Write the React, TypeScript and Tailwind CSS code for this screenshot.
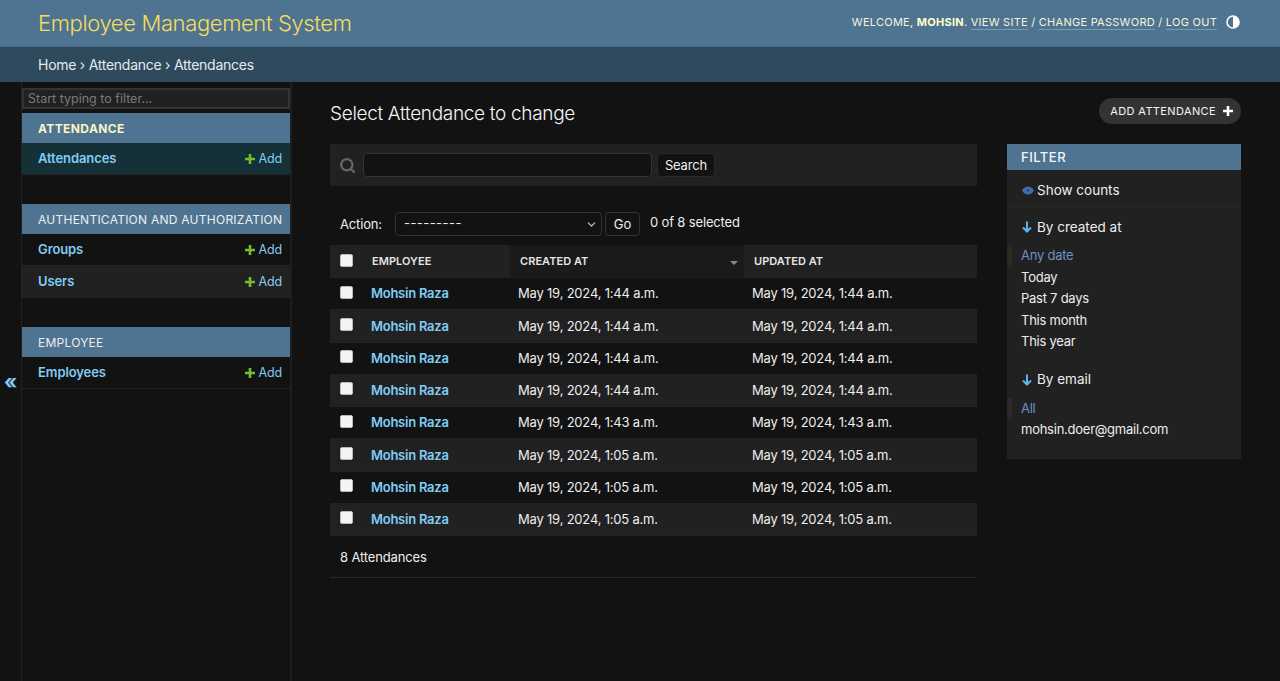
import React from 'react';
import { ChevronDown, Search } from 'lucide-react';

const font = 'font-["Inter","Liberation_Sans",sans-serif]';

const rows = [
  '1:44', '1:44', '1:44', '1:44', '1:43', '1:05', '1:05', '1:05',
];

const PlusIcon = ({ className }: { className: string }) => (
  <svg viewBox="0 0 10 10" className={`h-[10px] w-[10px] ${className}`} fill="currentColor">
    <path d="M3.7 0h2.6v3.7H10v2.6H6.3V10H3.7V6.3H0V3.7h3.7z" />
  </svg>
);

const DownArrow = () => (
  <svg viewBox="0 0 10 12" className="mr-[5px] h-[12px] w-[10px] text-[#5cb6f0]" fill="none" stroke="currentColor" strokeWidth="2">
    <path d="M5 0.5V10.5M1 6.5 5 10.5l4-4" />
  </svg>
);

const AddLink = () => (
  <span className="flex items-center gap-[4px] text-[12.5px] text-[#81cdf5]">
    <PlusIcon className="text-[#70bf2b]" />
    <span className="pt-[1px]">Add</span>
  </span>
);

const ModuleRow = ({ name, active, alt }: { name: string; active?: boolean; alt?: boolean }) => (
  <div
    className={`flex h-[32px] items-center justify-between border-b border-[#222] pl-4 pr-2 ${
      active ? 'bg-[#153138]' : alt ? 'bg-[#212121]' : 'bg-[#121212]'
    }`}
  >
    <span className="text-[13px] font-semibold tracking-[-0.1px] text-[#81cdf5]">{name}</span>
    <AddLink />
  </div>
);

const ModuleHead = ({ title, strong }: { title: string; strong?: boolean }) => (
  <div
    className={`flex h-[30px] items-center bg-[#4f7491] pl-4 pt-[2px] text-[12px] ${
      strong ? 'font-bold tracking-[0.4px] text-[#f9f5c4]' : 'tracking-[0.25px] text-[#eeeeee]'
    }`}
  >
    {title}
  </div>
);

const Box = () => (
  <span className="block h-[13px] w-[13px] rounded-[2px] border border-[#bbb] bg-[#f4f4f4]" />
);

const FilterLink = ({ label, selected }: { label: string; selected?: boolean }) => (
  <div
    className={`flex h-[21.5px] items-center text-[13px] tracking-[-0.25px] ${
      selected ? 'border-l-[5px] border-[#2a2a2a] pl-[9px] text-[#6d90c4]' : 'pl-[14px] text-[#eeeeee]'
    }`}
  >
    {label}
  </div>
);

export default function App() {
  return (
    <div className={`${font} flex h-[681px] flex-col overflow-hidden bg-[#121212] tracking-[-0.15px] text-[#eeeeee]`}>
      <header className="flex h-[47px] items-center justify-between border-b border-[#476a84] bg-[#4f7491] pl-[38px] pr-[40px]">
        <h1 className="text-[22px] font-light tracking-[-0.37px] text-[#f5dd5d]">Employee Management System</h1>
        <div className="mb-[2px] flex items-center text-[11px] tracking-[0.26px] text-[#f5f5d8]">
          <span>
            WELCOME, <strong className="font-bold text-[#ffffcc]">MOHSIN</strong>.{' '}
            <span className="border-b border-[#7d9ab1]">VIEW SITE</span> /{' '}
            <span className="border-b border-[#7d9ab1]">CHANGE PASSWORD</span> /{' '}
            <span className="border-b border-[#7d9ab1]">LOG OUT</span>
          </span>
          <svg viewBox="0 0 14 14" className="ml-[9px] h-[14px] w-[14px]">
            <circle cx="7" cy="7" r="6" fill="none" stroke="#fff" strokeWidth="1.6" />
            <path d="M7 1a6 6 0 0 1 0 12z" fill="#fff" />
          </svg>
        </div>
      </header>
      <nav className="flex h-[35px] items-center bg-[#2f4a5c] pl-[38px] text-[14px] tracking-[-0.26px] text-[#e4e9ed]">
        Home › Attendance › Attendances
      </nav>

      <div className="flex flex-1">
        <div className="flex w-[22px] items-center justify-center border-r border-[#222]">
          <span className="text-[20px] font-bold leading-none text-[#81cdf5]">«</span>
        </div>

        <aside className="w-[270px] border-r-2 border-[#1e1e1e]">
          <div className="mt-[6px] h-[21px] border-2 border-[#333] bg-[#212121] pl-[4px] text-[12.5px] leading-[17px] tracking-normal text-[#7a7a7a]">
            Start typing to filter...
          </div>
          <div className="mt-[4px]">
            <ModuleHead title="ATTENDANCE" strong />
            <ModuleRow name="Attendances" active />
          </div>
          <div className="mt-[29px]">
            <ModuleHead title="AUTHENTICATION AND AUTHORIZATION" />
            <ModuleRow name="Groups" />
            <ModuleRow name="Users" alt />
          </div>
          <div className="mt-[29px]">
            <ModuleHead title="EMPLOYEE" />
            <ModuleRow name="Employees" />
          </div>
        </aside>

        <main className="flex-1 pl-[38px] pr-[39px]">
          <div className="mt-[16px] flex items-start justify-between">
            <h2 className="mt-[3px] text-[19px] font-light leading-[26px] tracking-[-0.32px] text-[#f5f5f5]">
              Select Attendance to change
            </h2>
            <span className="flex h-[26px] items-center gap-[7px] rounded-full bg-[#333] pl-[11px] pr-[8px] text-[11px] tracking-[0.38px] text-[#f5f5f5]">
              ADD ATTENDANCE
              <PlusIcon className="text-white" />
            </span>
          </div>

          <div className="mt-[17px] flex gap-[30px]">
            <section className="w-[647px]">
              <div className="flex h-[42px] items-center bg-[#212121] pl-[10px]">
                <span className="flex w-[15px] justify-center">
                  <Search size={17} strokeWidth={3.2} className="shrink-0 text-[#666]" />
                </span>
                <div className="ml-[8px] h-[24px] w-[289px] rounded-[4px] border border-[#333] bg-[#121212]" />
                <span className="ml-[5px] flex h-[24px] w-[58px] items-center justify-center rounded-[4px] border border-[#2a2a2a] bg-[#121212] pt-[1px] text-[13px]">
                  Search
                </span>
              </div>

              <div className="mb-[9px] mt-[26px] flex h-[24px] items-center pl-[10px] text-[13px]">
                <span className="pt-[1px]">Action:</span>
                <div className="ml-[13px] flex h-[24px] w-[207px] items-center justify-between rounded-[4px] border border-[#333] bg-[#121212] pl-[8px] pr-[3px] tracking-[0.45px]">
                  ---------
                  <ChevronDown size={13} strokeWidth={2} className="text-[#ccc]" />
                </div>
                <span className="ml-[3px] flex h-[24px] w-[35px] items-center justify-center rounded-[4px] border border-[#333] bg-[#121212] pt-[1px]">
                  Go
                </span>
                <span className="mb-[3px] ml-[10px]">0 of 8 selected</span>
              </div>

              <div className="flex h-[33px] items-stretch border-b border-[#222] text-[11px] font-semibold tracking-[0.05px] text-[#e4e4e4]">
                <div className="flex w-[32px] items-center justify-center bg-[#212121] pb-[2px]">
                  <Box />
                </div>
                <div className="flex w-[148px] items-center bg-[#212121] pl-[10px]">EMPLOYEE</div>
                <div className="relative flex w-[234px] items-center bg-[#1a1a1a] pl-[10px]">
                  CREATED AT
                  <span className="absolute right-[6px] top-[16px] h-0 w-0 border-x-[4px] border-t-[4px] border-x-transparent border-t-[#888]" />
                </div>
                <div className="flex flex-1 items-center bg-[#212121] pl-[10px]">UPDATED AT</div>
              </div>

              {rows.map((time, index) => (
                <div
                  key={index}
                  className={`flex h-[32.25px] items-center border-b border-[#222] pt-[1px] text-[13px] tracking-[-0.2px] ${
                    index % 2 === 1 ? 'bg-[#212121]' : 'bg-[#121212]'
                  }`}
                >
                  <div className="flex w-[32px] justify-center pb-[4px]">
                    <Box />
                  </div>
                  <div className="w-[148px] pl-[9px] font-semibold tracking-[-0.25px] text-[#81cdf5]">Mohsin Raza</div>
                  <div className="w-[234px] pl-[8px]">May 19, 2024, {time} a.m.</div>
                  <div className="pl-[8px]">May 19, 2024, {time} a.m.</div>
                </div>
              ))}

              <div className="flex h-[42px] items-center border-b border-[#2a2a2a] pl-[10px] pt-[2px] text-[13px]">
                8 Attendances
              </div>
            </section>

            <aside className="h-[315px] w-[234px] bg-[#212121] tracking-normal">
              <div className="flex h-[26px] items-center bg-[#4f7491] pl-[14px] pt-[1px] text-[13px] font-medium tracking-[0.5px] text-[#f5f5f5]">
                FILTER
              </div>
              <div className="flex h-[38px] items-center gap-[3px] border-b border-[#262626] pl-[15px] pt-[3px] text-[13.5px]">
                <svg viewBox="0 0 12 8" className="h-[9px] w-[12px]">
                  <path d="M0 4C2 1 4 0 6 0s4 1 6 4C10 7 8 8 6 8S2 7 0 4z" fill="#3f6fb0" />
                  <circle cx="6" cy="3.8" r="1.5" fill="#2a4f85" />
                </svg>
                Show counts
              </div>
              <div className="mb-[9px] mt-[10px] flex h-[18px] items-center pl-[15px] text-[13.5px]">
                <DownArrow />
                By created at
              </div>
              <FilterLink label="Any date" selected />
              <FilterLink label="Today" />
              <FilterLink label="Past 7 days" />
              <FilterLink label="This month" />
              <FilterLink label="This year" />
              <div className="mb-[9px] mt-[18px] flex h-[18px] items-center pl-[15px] text-[13.5px]">
                <DownArrow />
                By email
              </div>
              <FilterLink label="All" selected />
              <FilterLink label="mohsin.doer@gmail.com" />
            </aside>
          </div>
        </main>
      </div>
    </div>
  );
}
